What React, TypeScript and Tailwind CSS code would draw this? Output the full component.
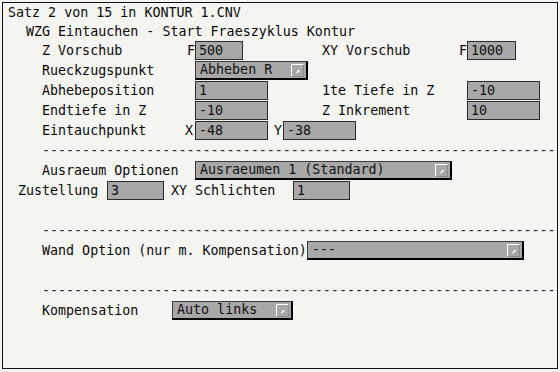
import React from 'react';

// Eingabefeld (grau, versenkt)
function Field({ value, w }: { value: string; w: string }) {
  return (
    <div className={`${w} h-[19px] shrink-0 border border-[#2b2b2b] bg-[#a8a8a8] pl-[3px] leading-[17px] text-[#111] whitespace-pre`}>
      {value}
    </div>
  );
}

// Auswahlliste mit kleinem Knopf rechts
function Combo({ value, w }: { value: string; w: string }) {
  return (
    <div className={`${w} h-[19px] shrink-0 flex items-center justify-between border-t border-l border-[#3a3a3a] border-r-2 border-b-2 border-r-black border-b-black bg-[#a8a8a8] pl-[4px] pr-[2px] text-[#111] whitespace-pre`}>
      <span className="leading-[16px]">{value}</span>
      <div className="w-[13px] h-[13px] border-t border-l border-white border-r border-b border-r-[#8a8a8a] border-b-[#8a8a8a] bg-[#a8a8a8]">
        <svg width="11" height="11" viewBox="0 0 11 11">
          <path d="M4.5 8 L7.5 5" stroke="#fff" strokeWidth="1.4" />
        </svg>
      </div>
    </div>
  );
}

function Dashes() {
  return (
    <div className="h-[20px] flex items-center pl-[39px] overflow-hidden whitespace-pre text-[#222]">
      {'-'.repeat(64)}
    </div>
  );
}

function App() {
  return (
    <div className="w-[560px] h-[372px] bg-[#f4f4f0] pt-[2px] pl-[2px] font-['DejaVu_Sans_Mono',monospace] text-[13.33px] text-[#0a0a0a]">
      <div className="w-[556px] h-[367px] border border-[#111] flex flex-col">
        <div className="h-[20px] flex items-center pl-[5px]">Satz 2 von 15 in KONTUR 1.CNV</div>
        <div className="h-[18px] flex items-center pl-[23px]">WZG Eintauchen - Start Fraeszyklus Kontur</div>

        {/* Vorschub */}
        <div className="h-[20px] flex items-start pl-[39px]">
          <div className="w-[280px] flex items-center">
            <span className="w-[145px] leading-[19px]">Z Vorschub</span>
            <span className="w-[8px] leading-[19px]">F</span>
            <Field value="500" w="w-[48px]" />
          </div>
          <div className="flex items-center">
            <span className="w-[137px] leading-[19px]">XY Vorschub</span>
            <span className="w-[8px] leading-[19px]">F</span>
            <Field value="1000" w="w-[49px]" />
          </div>
        </div>

        <div className="h-[20px] flex items-start pl-[39px]">
          <span className="w-[153px] leading-[19px]">Rueckzugspunkt</span>
          <Combo value="Abheben R" w="w-[113px]" />
        </div>

        <div className="h-[20px] flex items-start pl-[39px]">
          <div className="w-[280px] flex items-center">
            <span className="w-[153px] leading-[19px]">Abhebeposition</span>
            <Field value="1" w="w-[73px]" />
          </div>
          <div className="flex items-center">
            <span className="w-[145px] leading-[19px]">1te Tiefe in Z</span>
            <Field value="-10" w="w-[73px]" />
          </div>
        </div>

        <div className="h-[20px] flex items-start pl-[39px]">
          <div className="w-[280px] flex items-center">
            <span className="w-[153px] leading-[19px]">Endtiefe in Z</span>
            <Field value="-10" w="w-[73px]" />
          </div>
          <div className="flex items-center">
            <span className="w-[145px] leading-[19px]">Z Inkrement</span>
            <Field value="10" w="w-[73px]" />
          </div>
        </div>

        <div className="h-[20px] flex items-start pl-[39px]">
          <span className="w-[143px] leading-[19px]">Eintauchpunkt</span>
          <span className="w-[10px] leading-[19px]">X</span>
          <Field value="-48" w="w-[73px]" />
          <span className="w-[15px] leading-[19px] text-right pr-[1px]">Y</span>
          <Field value="-38" w="w-[73px]" />
        </div>

        <Dashes />

        <div className="h-[20px] flex items-start pl-[39px]">
          <span className="w-[153px] leading-[19px]">Ausraeum Optionen</span>
          <Combo value="Ausraeumen 1 (Standard)" w="w-[257px]" />
        </div>

        <div className="h-[20px] flex items-start pl-[15px]">
          <span className="w-[89px] leading-[19px]">Zustellung</span>
          <Field value="3" w="w-[57px]" />
          <span className="w-[129px] pl-[7px] leading-[19px]">XY Schlichten</span>
          <Field value="1" w="w-[57px]" />
        </div>

        <div className="h-[20px]" />
        <Dashes />

        <div className="h-[20px] flex items-start pl-[39px]">
          <span className="w-[265px] leading-[19px] whitespace-pre">Wand Option (nur m. Kompensation)</span>
          <Combo value="---" w="w-[217px]" />
        </div>

        <div className="h-[20px]" />
        <Dashes />

        <div className="h-[20px] flex items-start pl-[39px]">
          <span className="w-[130px] leading-[19px]">Kompensation</span>
          <Combo value="Auto links" w="w-[121px]" />
        </div>
      </div>
    </div>
  );
}

export default App;
